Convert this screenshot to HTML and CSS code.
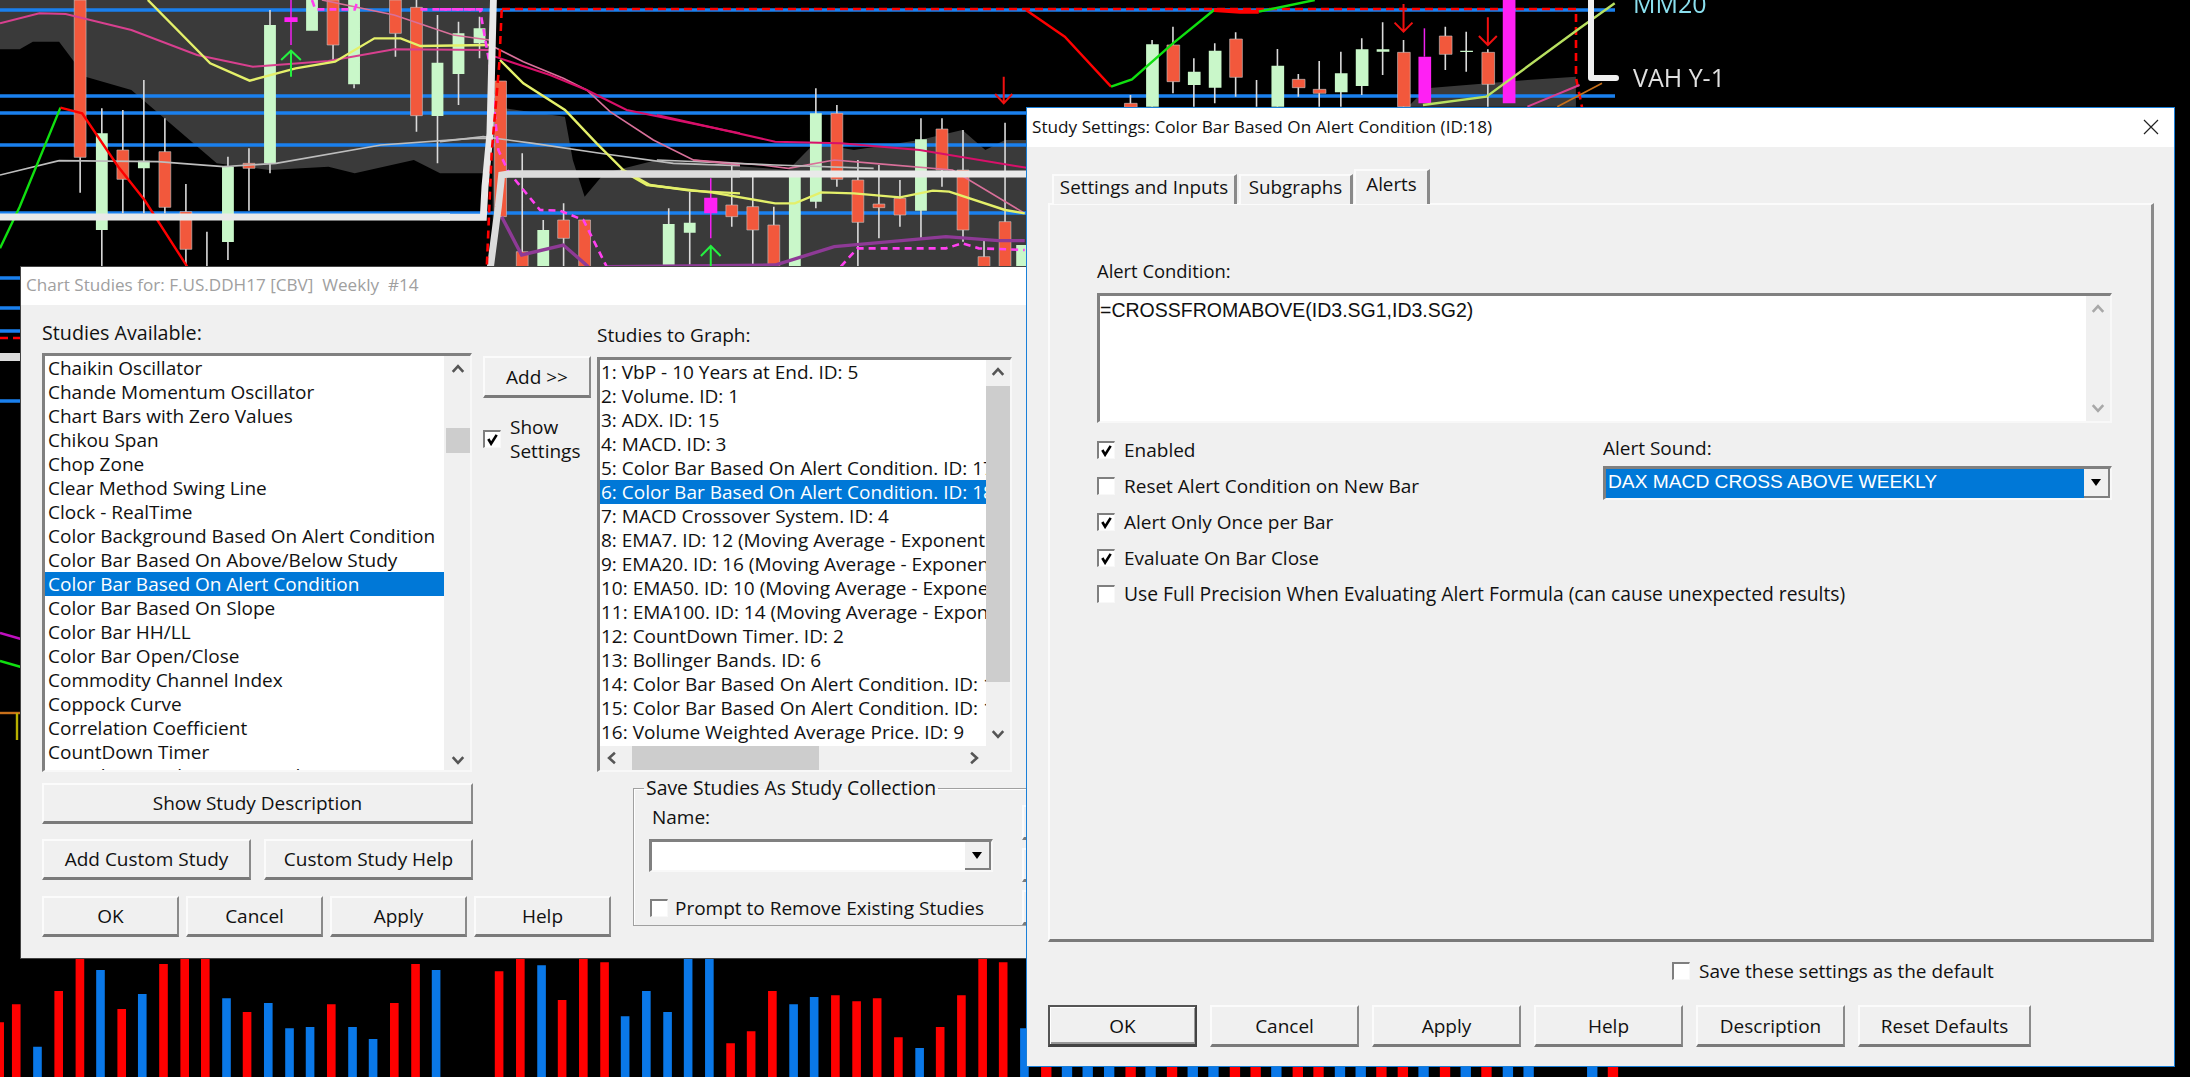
FILE: index.html
```html
<!DOCTYPE html>
<html lang="en">
<head>
<meta charset="utf-8">
<title>Study Settings</title>
<link rel="stylesheet" href="styles.css">
</head>
<body>
<svg class="defs" width="0" height="0" aria-hidden="true">
  <symbol id="check" viewBox="0 0 14 14"><path d="M2.5 6.5l3 5L11.5 2" fill="none" stroke="#000" stroke-width="2.8"/></symbol>
  <symbol id="up" viewBox="0 0 12 12"><path d="M1.5 8.5L6 3.5l4.5 5" fill="none" stroke="currentColor" stroke-width="2.2"/></symbol>
  <symbol id="down" viewBox="0 0 12 12"><path d="M1.5 3.5L6 8.5l4.5-5" fill="none" stroke="currentColor" stroke-width="2.2"/></symbol>
  <symbol id="left" viewBox="0 0 12 12"><path d="M8.5 1.5L3.5 6l5 4.5" fill="none" stroke="currentColor" stroke-width="2.2"/></symbol>
  <symbol id="right" viewBox="0 0 12 12"><path d="M3.5 1.5L8.5 6l-5 4.5" fill="none" stroke="currentColor" stroke-width="2.2"/></symbol>
</svg>

<main class="desktop">
<svg class="chart" width="2190" height="1077" viewBox="0 0 2190 1077" aria-hidden="true">
  <!-- left half of the price chart -->
  <svg x="0" y="0" width="1030" height="340" viewBox="0 0 1568 1020" preserveAspectRatio="none">
    <path class="cloud" d="M0 0V148H30L50 125H90L130 230L200 270L330 490L410 510L500 500L540 520L630 480L670 520H745V0Z"/>
    <path class="cloud" d="M750 320L860 350L872 480L890 590L920 520L1000 480L1200 510L1240 430L1300 450L1400 420L1465 390L1500 450L1530 420L1568 420V800H750Z"/>
  </svg>
  <svg x="1020" y="0" width="1170" height="340" viewBox="0 0 1568 1020" preserveAspectRatio="none">
    <path class="cloud" d="M520 320L545 265L680 240L745 230V320Z"/>
  </svg>
  <path class="blue" d="M0 10H1615M0 96H1615M0 113H1030M0 145H1030M0 213H1030M0 278H21M0 308H21M0 331H21M0 401H21"/>
  <svg x="0" y="0" width="1030" height="340" viewBox="0 0 1568 1020" preserveAspectRatio="none">
    <path class="wick" d="M122 472V578M155 325V800M187 330V640M219 240V640M251 355V640M283 552V800M315 695V800M347 470V780M379 445V632M411 30V520M507 135V180M539 253V265M602 100V170M634 0V395M666 45V490M698 65V315M730 50V175M795 460V800M827 660V690M858 610V800M1018 625V800M1050 575V800M1114 490V680M1146 520V800M1178 620V800M1242 265V625M1274 315V560M1306 480V800M1338 495V715M1370 540V680M1402 355V720M1434 355V560M1466 390V725M1530 368V800M1498 720V800"/>
    <path class="wick-m" d="M443 0V135M1082 535V715"/>
    <path class="up" d="M113 0h18V472h-18zM178 450h18V538h-18zM242 455h18V622h-18zM274 635h18V748h-18zM370 490h18V505h-18zM498 0h18V135h-18zM593 0h18V100h-18zM625 22h18V347h-18zM753 243h18V650h-18zM786 755h18V800h-18zM849 660h18V715h-18zM881 660h18V800h-18zM1105 615h18V650h-18zM1137 620h18V690h-18zM1169 675h18V800h-18zM1265 340h18V538h-18zM1297 540h18V667h-18zM1329 612h18V623h-18zM1361 595h18V645h-18zM1425 387h18V510h-18zM1457 510h18V690h-18zM1489 770h18V800h-18zM1521 665h18V800h-18z"/>
    <path class="dn" d="M146 400h18V690h-18zM210 482h18V505h-18zM338 500h18V726h-18zM402 75h18V490h-18zM466 0h18V92h-18zM530 0h18V253h-18zM657 188h18V348h-18zM689 100h18V222h-18zM721 85h18V130h-18zM818 690h18V800h-18zM1009 672h18V800h-18zM1041 668h18V698h-18zM1201 530h18V800h-18zM1233 340h18V605h-18zM1393 418h18V632h-18zM1547 735h18V800h-18z"/>
    <path class="mag" d="M433 52h20V66h-20zM1072 593h20V640h-20z"/>
    <path class="ln gray" d="M0 525L90 482L240 485L340 500L420 490L580 435L720 415L745 415"/>
    <path class="ln pink" d="M0 70L60 40L100 42L200 90L300 165L385 200L500 183L600 148L745 150"/>
    <path class="ln pink2" d="M490 0L600 45L690 105L745 120"/>
    <path class="ln yel" d="M225 0L320 190L380 242L450 205L510 185L570 115L610 115L640 138L745 135"/>
    <path class="ln grn" d="M0 745L30 620L92 323"/>
    <path class="ln red" d="M92 323L125 340L180 500L220 600L285 800"/>
    <path class="ln dpink" d="M1000 345L1180 425L1280 430L1400 450L1568 505"/>
    <path class="ln pink2" d="M1055 480L1160 495L1200 505L1270 480L1330 490L1450 510L1560 640"/>
    <path class="ln yel" d="M945 510L985 555L1085 578L1180 610L1210 610L1250 577L1300 580L1370 592L1420 572L1445 575L1530 630L1560 640"/>
    <path class="ln gray" d="M1000 480L1180 495L1330 505"/>
    <path class="ln purp" d="M925 800L1180 795L1270 740L1440 710L1520 722L1560 722"/>
    <path class="ln mdash" d="M1280 800L1305 745L1440 745L1465 730L1490 745L1560 750"/>
    <path class="ln mdash" d="M475 0L480 28H540L545 0M640 28H735"/>
    <path class="ln garrow" d="M443 230V152M428 180L443 152L458 180M1082 800V738M1067 768L1082 738L1097 768"/>
    <path class="ln rarrow" d="M1528 230V310M1515 282L1528 310L1541 282"/>
  </svg>
  <path class="thick" d="M1030 174H507M0 217H450"/>
  <svg x="440" y="0" width="300" height="270" viewBox="0 0 900 810" preserveAspectRatio="none">
    <path class="ln gray" d="M0 425L130 410L280 430L480 460L700 490L900 497"/>
    <path class="ln pink2" d="M150 135L250 185L370 235L440 270L510 335L640 420L760 480L900 495"/>
    <path class="ln dpink" d="M165 170L330 225L440 270L560 330L900 400"/>
    <path class="ln yel" d="M180 180L250 250L375 330L470 430L550 510L630 555L750 572L900 580"/>
    <path class="ln purp" d="M185 650L245 765L370 735L445 800"/>
    <path class="ln mdash" d="M0 28H120L150 200L175 450L205 515L300 630L360 632L430 660L500 800"/>
    <path class="thick" d="M0 652H130L135 560L150 400L160 0"/>
    <path class="thick thin" d="M900 522H205L185 525L175 620L150 810"/>
    <path class="ln rdash" d="M185 30L178 190L155 460L140 810"/>
  </svg>
  <path class="ln rdash" d="M502 9H1576V78L1582 107"/>
  <!-- right half of the price chart -->
  <svg x="1020" y="0" width="1170" height="340" viewBox="0 0 1568 1020" preserveAspectRatio="none">
    <path class="wick" d="M148 285V322M177 120V320M205 80V280M233 175V320M261 130V310M289 97V290M317 240V320M345 147V320M373 222V290M401 183V320M430 155V320M458 115V285M486 67V225M514 120V320M570 80V210M598 95V215M627 148V320"/>
    <path class="wick-m" d="M542 85V170"/>
    <path class="up" d="M140 310h17V322h-17zM197 135h17V245h-17zM281 117h17V232h-17zM365 238h17V263h-17zM393 268h17V280h-17zM506 157h17V320h-17zM562 108h17V163h-17zM619 157h17V253h-17z"/>
    <path class="dn" d="M169 133h17V320h-17zM225 215h17V255h-17zM253 152h17V263h-17zM337 197h17V320h-17zM422 220h17V277h-17zM450 148h17V258h-17zM478 148h17V155h-17zM590 152h17V156h-17z"/>
    <path class="mag" d="M534 170h17V310h-17zM647 0h17V310h-17z"/>
    <path class="ln red" d="M8 30L60 110L122 260"/>
    <path class="ln grn" d="M122 260L150 238L205 130L260 30M320 35L395 0"/>
    <path class="ln red wide" d="M260 30L295 35H320"/>
    <path class="ln yelg" d="M540 315L625 290L750 85L797 10"/>
    <path class="ln pink" d="M680 320L750 255"/>
    <path class="ln orange" d="M720 320L780 250"/>
    <path class="ln rarrow" d="M514 12V95M502 68L514 95L526 68M627 52V135M615 108L627 135L639 108"/>
  </svg>
  <path class="stub" d="M1591 0V78H1616"/>
  <text class="lab lab-mm" x="1633" y="13">MM20</text>
  <text class="lab lab-vah" x="1633" y="87">VAH Y-1</text>
  <!-- slivers left of the first window -->
  <path class="ln rdash" d="M0 338H21"/>
  <path class="thick bar" d="M0 357H21"/>
  <path class="ln m2" d="M0 633L21 639"/>
  <path class="ln grn" d="M0 661L21 667"/>
  <path class="ln orange w2" d="M0 713H21"/>
  <path class="ln olive" d="M17 713V740"/>
  <!-- volume bars -->
  <svg x="0" y="770" width="1040" height="307" viewBox="0 0 1568 921" preserveAspectRatio="none">
    <path class="vr" d="M-7 757h13V921h-13zM18 703h13V921h-13zM82 663h13V921h-13zM114 560h13V921h-13zM177 717h13V921h-13zM240 582h13V921h-13zM272 560h13V921h-13zM303 560h13V921h-13zM366 726h13V921h-13zM493 703h13V921h-13zM588 699h13V921h-13zM620 582h13V921h-13zM746 604h13V921h-13zM778 560h13V921h-13zM841 690h13V921h-13zM873 560h13V921h-13zM905 577h13V921h-13zM1095 820h13V921h-13zM1126 784h13V921h-13zM1158 663h13V921h-13zM1253 676h13V921h-13zM1285 694h13V921h-13zM1316 685h13V921h-13zM1348 802h13V921h-13zM1411 771h13V921h-13zM1443 676h13V921h-13zM1475 560h13V921h-13zM1506 577h13V921h-13z"/>
    <path class="vb" d="M50 830h13V921h-13zM145 600h13V921h-13zM208 672h13V921h-13zM335 685h13V921h-13zM398 699h13V921h-13zM430 775h13V921h-13zM461 771h13V921h-13zM525 771h13V921h-13zM556 807h13V921h-13zM651 600h13V921h-13zM810 586h13V921h-13zM936 739h13V921h-13zM968 663h13V921h-13zM1000 726h13V921h-13zM1031 560h13V921h-13zM1063 560h13V921h-13zM1190 703h13V921h-13zM1221 681h13V921h-13zM1380 834h13V921h-13zM1538 775h13V921h-13z"/>
  </svg>
  <svg x="1030" y="920" width="1160" height="157" viewBox="0 0 1568 471" preserveAspectRatio="none">
    <path class="vr" d="M15 440h14V471h-14zM129 440h14V471h-14zM185 440h14V471h-14zM270 440h14V471h-14zM298 440h14V471h-14zM355 440h14V471h-14zM383 440h14V471h-14zM468 440h14V471h-14zM497 440h14V471h-14zM554 440h14V471h-14zM610 440h14V471h-14zM781 440h14V471h-14z"/>
    <path class="vb" d="M43 440h14V471h-14zM71 440h14V471h-14zM100 440h14V471h-14zM156 440h14V471h-14zM213 440h14V471h-14zM241 440h14V471h-14zM326 440h14V471h-14zM412 440h14V471h-14zM440 440h14V471h-14zM525 440h14V471h-14zM582 440h14V471h-14zM639 440h14V471h-14zM667 440h14V471h-14zM753 440h14V471h-14z"/>
  </svg>
</svg>

<section class="win win-studies">
  <header class="title title-dim">Chart Studies for: F.US.DDH17 [CBV]&nbsp; Weekly&nbsp; #14</header>
  <div class="studies-body">
    <div class="studies-top">
      <div class="col-avail">
        <div class="lbl lbl-avail">Studies Available:</div>
        <div class="list list-avail">
          <div class="rows">
            <div class="row">Chaikin Oscillator</div>
            <div class="row">Chande Momentum Oscillator</div>
            <div class="row">Chart Bars with Zero Values</div>
            <div class="row">Chikou Span</div>
            <div class="row">Chop Zone</div>
            <div class="row">Clear Method Swing Line</div>
            <div class="row">Clock - RealTime</div>
            <div class="row">Color Background Based On Alert Condition</div>
            <div class="row">Color Bar Based On Above/Below Study</div>
            <div class="row sel">Color Bar Based On Alert Condition</div>
            <div class="row">Color Bar Based On Slope</div>
            <div class="row">Color Bar HH/LL</div>
            <div class="row">Color Bar Open/Close</div>
            <div class="row">Commodity Channel Index</div>
            <div class="row">Coppock Curve</div>
            <div class="row">Correlation Coefficient</div>
            <div class="row">CountDown Timer</div>
            <div class="row">Cumulative Delta Bars - Trades</div>
          </div>
          <div class="vbar vbar-avail">
            <svg class="arr"><use href="#up"/></svg>
            <div class="track"><div class="thumb thumb-avail"></div></div>
            <svg class="arr"><use href="#down"/></svg>
          </div>
        </div>
      </div>
      <div class="col-mid">
        <button class="btn btn-add">Add &gt;&gt;</button>
        <label class="show-set"><span class="cb"><svg class="tick"><use href="#check"/></svg></span><span>Show<br>Settings</span></label>
      </div>
      <div class="col-graph">
        <div class="lbl lbl-graph">Studies to Graph:</div>
        <div class="list list-graph">
          <div class="graph-main">
            <div class="rows">
              <div class="row">1: VbP - 10 Years at End. ID: 5</div>
              <div class="row">2: Volume. ID: 1</div>
              <div class="row">3: ADX. ID: 15</div>
              <div class="row">4: MACD. ID: 3</div>
              <div class="row">5: Color Bar Based On Alert Condition. ID: 17</div>
              <div class="row sel">6: Color Bar Based On Alert Condition. ID: 18</div>
              <div class="row">7: MACD Crossover System. ID: 4</div>
              <div class="row">8: EMA7. ID: 12 (Moving Average - Exponential)</div>
              <div class="row">9: EMA20. ID: 16 (Moving Average - Exponential)</div>
              <div class="row">10: EMA50. ID: 10 (Moving Average - Exponential)</div>
              <div class="row">11: EMA100. ID: 14 (Moving Average - Exponential)</div>
              <div class="row">12: CountDown Timer. ID: 2</div>
              <div class="row">13: Bollinger Bands. ID: 6</div>
              <div class="row">14: Color Bar Based On Alert Condition. ID: 19</div>
              <div class="row">15: Color Bar Based On Alert Condition. ID: 13</div>
              <div class="row">16: Volume Weighted Average Price. ID: 9</div>
            </div>
            <div class="vbar vbar-graph">
              <svg class="arr"><use href="#up"/></svg>
              <div class="track"><div class="thumb thumb-graph"></div></div>
              <svg class="arr"><use href="#down"/></svg>
            </div>
          </div>
          <div class="hbar">
            <svg class="arr"><use href="#left"/></svg>
            <div class="htrack"><div class="hthumb"></div></div>
            <svg class="arr"><use href="#right"/></svg>
          </div>
        </div>
      </div>
    </div>
    <div class="studies-bottom">
      <div class="btn-col">
        <button class="btn btn-desc">Show Study Description</button>
        <div class="btn-pair">
          <button class="btn">Add Custom Study</button>
          <button class="btn">Custom Study Help</button>
        </div>
        <div class="btn-four">
          <button class="btn">OK</button>
          <button class="btn">Cancel</button>
          <button class="btn">Apply</button>
          <button class="btn">Help</button>
        </div>
      </div>
      <fieldset class="group">
        <legend>Save Studies As Study Collection</legend>
        <div class="group-left">
          <div class="lbl name-lbl">Name:</div>
          <div class="combo combo-name"><div class="combo-val"></div><div class="combo-btn"><i class="tri"></i></div></div>
          <label class="chk chk-prompt"><span class="cb"></span><span>Prompt to Remove Existing Studies</span></label>
        </div>
        <div class="group-right">
          <button class="btn"></button>
          <button class="btn"></button>
          <button class="btn"></button>
        </div>
      </fieldset>
    </div>
  </div>
</section>

<section class="win win-settings">
  <header class="title">
    <span>Study Settings: Color Bar Based On Alert Condition (ID:18)</span>
    <svg class="close" width="16" height="16" viewBox="0 0 16 16"><path d="M1 1L15 15M15 1L1 15" fill="none" stroke="#222" stroke-width="1.2"/></svg>
  </header>
  <div class="settings-body">
    <nav class="tabs">
      <div class="tab tab-1">Settings and Inputs</div>
      <div class="tab tab-2">Subgraphs</div>
      <div class="tab tab-3">Alerts</div>
    </nav>
    <div class="panel">
      <div class="lbl cond-lbl">Alert Condition:</div>
      <div class="cond">
        <div class="cond-text">=CROSSFROMABOVE(ID3.SG1,ID3.SG2)</div>
        <div class="vbar vbar-cond">
          <svg class="arr"><use href="#up"/></svg>
          <svg class="arr"><use href="#down"/></svg>
        </div>
      </div>
      <div class="opts">
        <label class="chk"><span class="cb"><svg class="tick"><use href="#check"/></svg></span><span>Enabled</span></label>
        <div class="sound">
          <div class="lbl sound-lbl">Alert Sound:</div>
          <div class="combo combo-sound"><div class="combo-val sel">DAX MACD CROSS ABOVE WEEKLY</div><div class="combo-btn"><i class="tri"></i></div></div>
        </div>
        <label class="chk"><span class="cb"></span><span>Reset Alert Condition on New Bar</span></label>
        <label class="chk"><span class="cb"><svg class="tick"><use href="#check"/></svg></span><span>Alert Only Once per Bar</span></label>
        <label class="chk"><span class="cb"><svg class="tick"><use href="#check"/></svg></span><span>Evaluate On Bar Close</span></label>
        <label class="chk chk-wide"><span class="cb"></span><span>Use Full Precision When Evaluating Alert Formula (can cause unexpected results)</span></label>
      </div>
    </div>
    <label class="chk chk-save"><span class="cb"></span><span>Save these settings as the default</span></label>
    <div class="foot">
      <button class="btn btn-def">OK</button>
      <button class="btn">Cancel</button>
      <button class="btn">Apply</button>
      <button class="btn">Help</button>
      <button class="btn">Description</button>
      <button class="btn btn-reset">Reset Defaults</button>
    </div>
  </div>
</section>
</main>
</body>
</html>
```
FILE: styles.css
```css
* { box-sizing: border-box; }
html, body { margin: 0; padding: 0; background: #000; overflow: hidden; }
body { width: 2190px; height: 1077px; }
.defs { position: absolute; }
.desktop { position: relative; width: 2190px; height: 1077px; background: #000; overflow: hidden;
  font: 19px/24px "Open Sans", "Noto Sans", sans-serif; color: #111; }

/* chart */
.chart { position: absolute; left: 0; top: 0; display: block; filter: blur(.5px); }
.chart path { vector-effect: non-scaling-stroke; fill: none; }
.chart .cloud { fill: #3a3a3a; }
.chart .blue { stroke: #1a80ee; stroke-width: 3.4; }
.chart .wick { stroke: #dadada; stroke-width: 1.6; }
.chart .wick-m { stroke: #f020f0; stroke-width: 1.5; }
.chart .up { fill: #f2583c; stroke: #c8c8c8; stroke-width: .6; }
.chart .dn { fill: #c9f7c9; }
.chart .mag { fill: #ff20f4; }
.chart .ln { stroke-width: 1.6; }
.chart .gray { stroke: #bdbdbd; }
.chart .pink { stroke: #d8408f; stroke-width: 2; }
.chart .pink2 { stroke: #d9709a; }
.chart .dpink { stroke: #d8106a; stroke-width: 2; }
.chart .yel { stroke: #e4f06a; stroke-width: 2.4; }
.chart .yelg { stroke: #b8e060; stroke-width: 2.4; }
.chart .grn { stroke: #10e010; stroke-width: 2.4; }
.chart .red { stroke: #f00; stroke-width: 2.4; }
.chart .wide { stroke-width: 4; }
.chart .purp { stroke: #8e3a96; stroke-width: 3.4; }
.chart .mdash { stroke: #ff40f0; stroke-width: 2.6; stroke-dasharray: 7 5; }
.chart .rdash { stroke: #f00; stroke-width: 2.6; stroke-dasharray: 8 5; }
.chart .garrow { stroke: #25f040; stroke-width: 2; }
.chart .rarrow { stroke: #f01010; stroke-width: 2; }
.chart .orange { stroke: #c8701a; }
.chart .w2 { stroke-width: 2.4; }
.chart .olive { stroke: #b8b000; stroke-width: 2.4; }
.chart .m2 { stroke: #c010c0; stroke-width: 2.4; }
.chart .thick { stroke: #e9e9e9; stroke-width: 7; }
.chart .thin { stroke: #dcdcdc; }
.chart .bar { stroke: #dcdcdc; stroke-width: 8; }
.chart .stub { stroke: #f0f0f0; stroke-width: 6; stroke-linejoin: round; stroke-linecap: round; }
.chart .vr { fill: #f00; }
.chart .vb { fill: #0a78e8; }
.lab { font: 25px "Open Sans", sans-serif; }
.lab-mm { fill: #8adfee; }
.lab-vah { fill: #e0e0e0; }

/* windows */
.win { position: absolute; background: #f0f0f0; overflow: hidden; }
.win-studies { left: 20px; top: 266px; width: 1040px; height: 693px; border: 1px solid #444; border-right: 0; }
.win-settings { left: 1026px; top: 107px; width: 1149px; height: 960px; border: 1px solid #1a7fd8; }
.title { height: 38px; background: #fff; display: flex; align-items: center; justify-content: space-between;
  padding: 0 15px 2px 5px; font-size: 17.2px; }
.title-dim { color: #a0a0a0; height: 38px; font-size: 17.1px; }
.close { display: block; }
.lbl { white-space: nowrap; }
button { font: inherit; color: inherit; }

.btn { display: block; height: 41px; padding: 0; background: #f0f0f0; border-style: solid; border-width: 2px 2px 3px 2px;
  border-color: #fbfbfb #8a8a8a #7a7a7a #fbfbfb; border-radius: 0; }

.cb { flex: none; width: 18px; height: 18px; background: #fff; border-style: solid; border-width: 2px 1px 1px 2px;
  border-color: #7f7f7f #f8f8f8 #f8f8f8 #7f7f7f; display: flex; align-items: center; justify-content: center; }
.tick { width: 13px; height: 13px; display: block; }
.chk { display: flex; align-items: center; gap: 9px; white-space: nowrap; }

/* lists */
.list { background: #f0f0f0; border-style: solid; border-width: 3px 2px 2px 3px; border-color: #808080 #f8f8f8 #f8f8f8 #808080; display: flex; overflow: hidden; }
.rows { background: #fff; overflow: hidden; flex: 1; min-width: 0; }
.row { height: 24px; line-height: 25px; padding-left: 3px; white-space: nowrap; overflow: hidden; }
.row.sel { background: #0078d7; color: #fff; }
.sel { background: #0078d7; color: #fff; }
.vbar { flex: none; width: 24px; display: flex; flex-direction: column; align-items: center; justify-content: space-between; background: #f0f0f0; color: #555; padding: 6px 0; }
.arr { width: 14px; height: 14px; display: block; flex: none; }
.track { flex: 1; width: 100%; position: relative; }
.thumb { position: absolute; left: 0; right: 0; background: #cdcdcd; }

/* chart studies */
.studies-body { padding: 17px 0 0 21px; }
.studies-top { display: flex; align-items: flex-start; }
.col-avail { width: 430px; }
.lbl-avail { height: 31px; line-height: 22px; font-size: 19.7px; }
.list-avail { height: 419px; }
.vbar-avail { margin-left: 2px; padding-bottom: 3px; }
.thumb-avail { top: 52px; height: 25px; }
.col-mid { width: 108px; margin-left: 11px; padding-top: 34px; }
.btn-add { width: 108px; height: 42px; }
.show-set { display: flex; align-items: center; gap: 9px; margin-top: 17px; line-height: 24px; }
.col-graph { width: 415px; margin-left: 6px; }
.lbl-graph { height: 35px; line-height: 26px; }
.list-graph { height: 415px; flex-direction: column; }
.list-graph .row { padding-left: 1px; line-height: 24px; }
.graph-main { display: flex; height: 386px; flex: none; }
.vbar-graph { padding: 5px 0; }
.thumb-graph { top: 7px; height: 296px; }
.hbar { flex: none; height: 24px; width: 386px; display: flex; align-items: center; justify-content: space-between; color: #555; padding: 0 5px; }
.htrack { position: relative; flex: 1; height: 24px; }
.hthumb { position: absolute; left: 13px; width: 187px; top: 0; bottom: 0; background: #cdcdcd; }
.studies-bottom { display: flex; align-items: flex-start; }
.btn-col { width: 569px; padding-top: 11px; display: flex; flex-direction: column; flex: none; }
.btn-desc { width: 431px; }
.btn-pair { display: flex; gap: 13px; width: 431px; margin-top: 15px; }
.btn-pair .btn { flex: 1; }
.btn-four { display: flex; gap: 7px; margin-top: 16px; }
.btn-four .btn { width: 137px; }
.group { margin: 5px 0 0 22px; padding: 0 0 0 15px; width: 500px; height: 149px; border: 1px solid #a0a0a0; box-shadow: inset 1px 1px 0 #fff; display: flex; min-inline-size: 0; flex: none; }
.group legend { padding: 0 2px; margin-left: -5px; line-height: 22px; font-size: 19.4px; white-space: nowrap; }
.group-left { width: 344px; flex: none; margin-right: 29px; }
.name-lbl { margin: 6px 0 10px 3px; line-height: 24px; }
.combo { display: flex; background: #fff; border-style: solid; border-width: 3px 2px 2px 3px; border-color: #808080 #f8f8f8 #f8f8f8 #808080; }
.combo-name { height: 33px; }
.combo-val { flex: 1; min-width: 0; white-space: nowrap; }
.combo-btn { flex: none; width: 26px; background: #f0f0f0; border-bottom: 2px solid #808080; border-right: 2px solid #808080; display: flex; align-items: center; justify-content: center; }
.tri { width: 0; height: 0; border-left: 5px solid transparent; border-right: 5px solid transparent; border-top: 7px solid #000; }
.chk-prompt { margin-top: 24px; margin-left: 1px; gap: 7px; }
.group-right { display: flex; flex-direction: column; gap: 8px; margin-top: 6px; }
.group-right .btn { width: 100px; height: 41px; }

/* study settings */
.win-settings .title { height: 39px; }
.settings-body { padding: 22px 0 0 21px; }
.tabs { display: flex; align-items: flex-end; height: 35px; padding-left: 4px; position: relative; z-index: 1; }
.tab { height: 30px; line-height: 23px; text-align: center; background: #f0f0f0; border-style: solid; border-width: 2px 3px 0 2px; border-color: #fbfbfb #8a8a8a #f0f0f0 #fbfbfb; white-space: nowrap; font-size: 18.8px; }
.tab-1 { width: 185px; }
.tab-2 { width: 114px; margin-left: 2px; }
.tab-3 { width: 76px; height: 35px; line-height: 27px; margin-left: 1px; }
.panel { width: 1106px; height: 739px; margin-top: -1px; padding: 58px 39px 0 47px; border-style: solid; border-width: 2px 3px 3px 2px; border-color: #fbfbfb #8a8a8a #7a7a7a #fbfbfb; }
.cond-lbl { height: 30px; line-height: 16px; font-size: 18.4px; }
.cond { height: 130px; display: flex; background: #f0f0f0; border-style: solid; border-width: 3px 2px 2px 3px; border-color: #808080 #f8f8f8 #f8f8f8 #808080; }
.cond-text { flex: 1; background: #fff; padding-left: 0; font: 19.5px/28px "Liberation Sans", Arial, sans-serif; white-space: nowrap; }
.vbar-cond { color: #a8a8a8; padding: 6px 0; }
.opts { display: grid; grid-template-columns: 506px 1fr; grid-auto-rows: 36px; margin-top: 9px; align-items: center; }
.opts .chk { grid-column: 1; }
.opts .chk-wide { grid-column: 1 / span 2; font-size: 19.3px; }
.sound { grid-column: 2; grid-row: 1 / span 2; align-self: start; padding-top: 1px; }
.sound-lbl { height: 33px; line-height: 30px; }
.combo-sound { height: 34px; background: #f0f0f0; }
.combo-sound .combo-val { background: #0078d7; color: #fff; padding-left: 2px; font: 19.2px/26px "Liberation Sans", Arial, sans-serif; }
.chk-save { margin: 20px 0 0 624px; height: 18px; }
.foot { display: flex; gap: 13px; margin-top: 25px; }
.foot .btn { width: 149px; height: 42px; }
.foot .btn-reset { width: 173px; }
.foot .btn-def { border-color: #555 #444 #444 #555; box-shadow: inset 1px 1px 0 #fff, inset -1px -2px 0 #999; }
```
